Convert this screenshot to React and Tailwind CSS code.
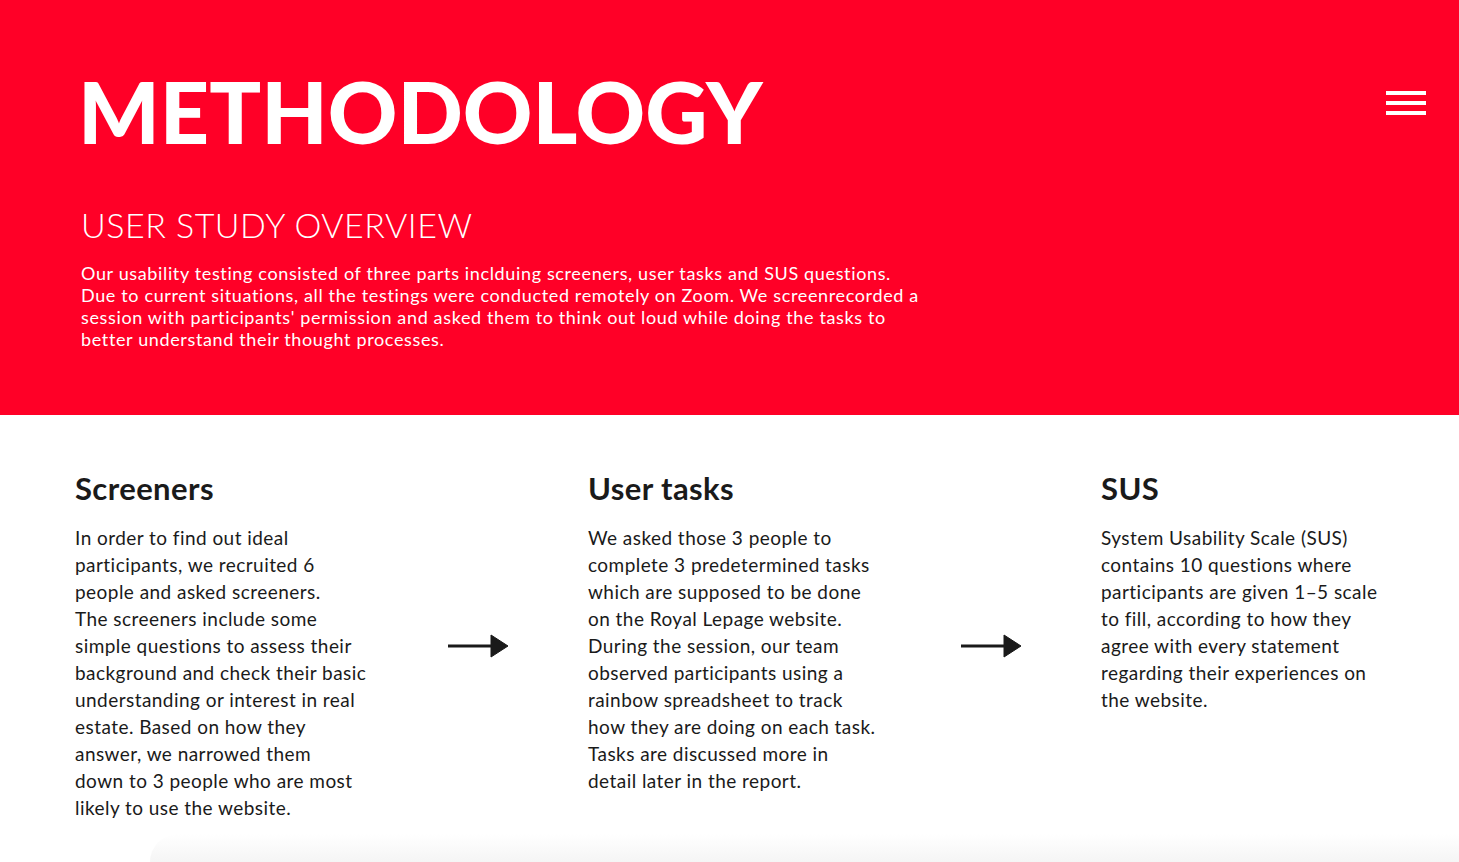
import React from "react";

function Arrow() {
  return (
    <svg width="62" height="24" viewBox="0 0 62 24" className="shrink-0">
      <line x1="0" y1="12" x2="46" y2="12" stroke="#1a1a1a" strokeWidth="3" />
      <polygon points="43,1 60,12 43,23" fill="#1a1a1a" stroke="#1a1a1a" strokeWidth="1" strokeLinejoin="round" />
    </svg>
  );
}

function Col({ title, lines }) {
  return (
    <div className="w-[305px] shrink-0">
      <h2 className="text-[31px] font-bold leading-[36px] tracking-[0.4px] text-[#1a1a1a] mb-[18px]">{title}</h2>
      <p className="text-[19px] leading-[27px] tracking-[0.45px] text-[#1a1a1a]">
        {lines.map((l, i) => (
          <React.Fragment key={i}>
            {l}
            {i < lines.length - 1 && <br />}
          </React.Fragment>
        ))}
      </p>
    </div>
  );
}

function ArrowCell() {
  return (
    <div className="w-[208px] shrink-0 flex items-center justify-center pr-[10px]">
      <Arrow />
    </div>
  );
}

export default function App() {
  return (
    <div className="w-[1459px] h-[862px] overflow-hidden bg-white relative" style={{ fontFamily: "Lato, 'Noto Sans', sans-serif" }}>
      <header className="bg-[#ff0027] h-[415px] relative pl-[78px] pt-[68px]">
        <h1 className="text-[86px] font-black leading-none text-white">METHODOLOGY</h1>
        <div className="absolute right-[33px] top-[91px] flex flex-col gap-[6px]">
          <span className="block w-[40px] h-[4px] bg-white" />
          <span className="block w-[40px] h-[4px] bg-white" />
          <span className="block w-[40px] h-[4px] bg-white" />
        </div>
        <h2 className="mt-[52px] ml-[3px] text-[34px] font-light leading-[38px] tracking-[0.5px] text-white">USER STUDY OVERVIEW</h2>
        <p className="mt-[18px] ml-[3px] w-[900px] text-[18px] leading-[22px] tracking-[0.64px] text-white">
          Our usability testing consisted of three parts inclduing screeners, user tasks and SUS questions.<br />
          Due to current situations, all the testings were conducted remotely on Zoom. We screenrecorded a<br />
          session with participants' permission and asked them to think out loud while doing the tasks to<br />
          better understand their thought processes.
        </p>
      </header>
      <section className="flex items-stretch pl-[75px] mt-[55px]">
        <Col
          title="Screeners"
          lines={[
            "In order to find out ideal",
            "participants, we recruited 6",
            "people and asked screeners.",
            "The screeners include some",
            "simple questions to assess their",
            "background and check their basic",
            "understanding or interest in real",
            "estate. Based on how they",
            "answer, we narrowed them",
            "down to 3 people who are most",
            "likely to use the website.",
          ]}
        />
        <ArrowCell />
        <Col
          title="User tasks"
          lines={[
            "We asked those 3 people to",
            "complete 3 predetermined tasks",
            "which are supposed to be done",
            "on the Royal Lepage website.",
            "During the session, our team",
            "observed participants using a",
            "rainbow spreadsheet to track",
            "how they are doing on each task.",
            "Tasks are discussed more in",
            "detail later in the report.",
          ]}
        />
        <ArrowCell />
        <Col
          title="SUS"
          lines={[
            "System Usability Scale (SUS)",
            "contains 10 questions where",
            "participants are given 1–5 scale",
            "to fill, according to how they",
            "agree with every statement",
            "regarding their experiences on",
            "the website.",
          ]}
        />
      </section>
      <div className="absolute left-[150px] right-0 bottom-0 h-[28px] bg-gradient-to-b from-transparent to-[#f5f5f5] rounded-tl-[80px]" />
    </div>
  );
}
